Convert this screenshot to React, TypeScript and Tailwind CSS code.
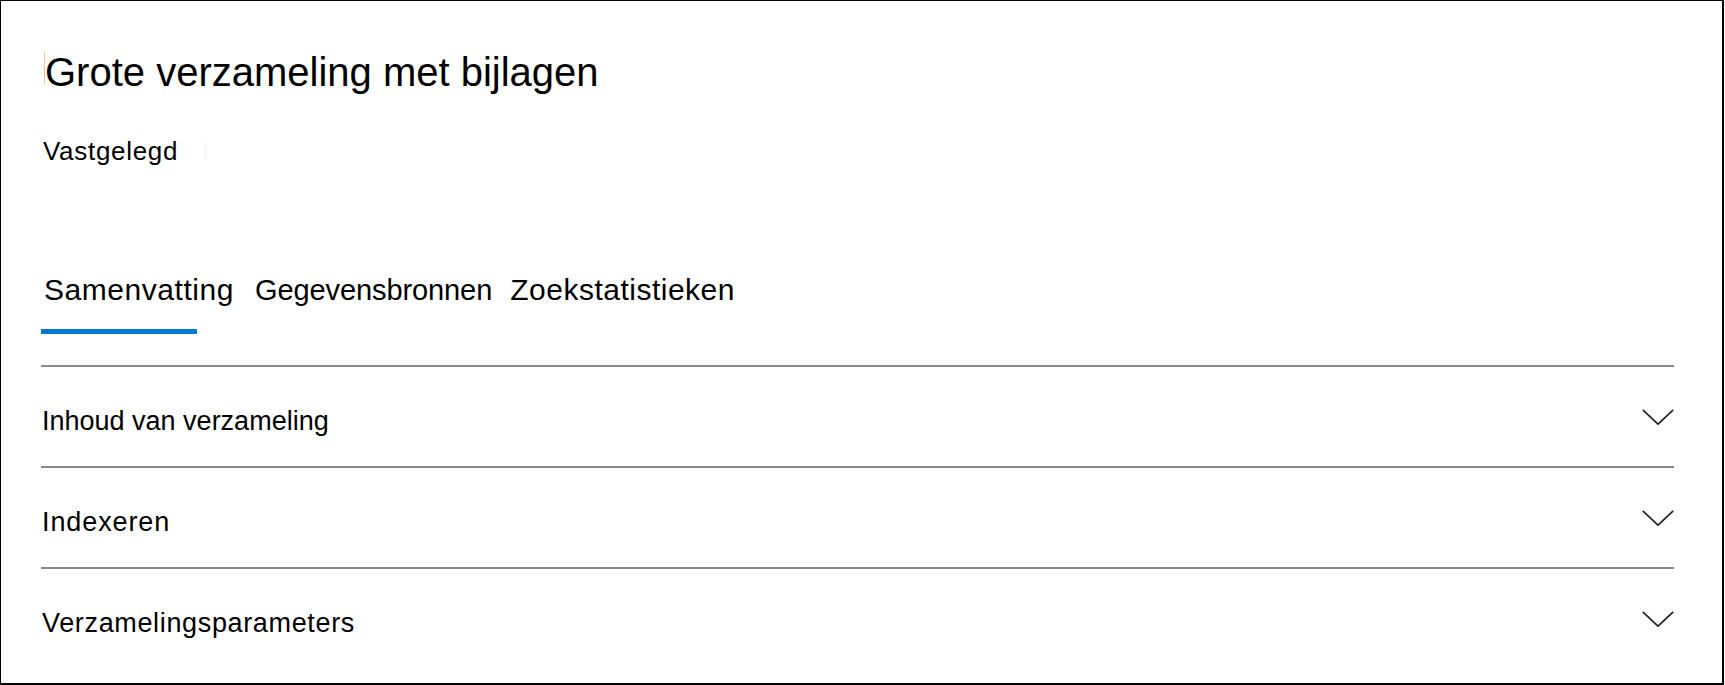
const sections = [
  { label: "Inhoud van verzameling", track: "tracking-[0px]" },
  { label: "Indexeren", track: "tracking-[0.9px]" },
  { label: "Verzamelingsparameters", track: "tracking-[0.65px]" },
];

function Chevron() {
  return (
    <svg width="32" height="16" viewBox="0 0 32 16" fill="none">
      <polyline
        points="0.8,0.8 16,15.2 31.2,0.8"
        stroke="#1f1f1f"
        strokeWidth="1.6"
        strokeLinejoin="miter"
      />
    </svg>
  );
}

export default function App() {
  return (
    <div className="h-[685px] w-[1724px] border-l border-t border-r-2 border-b-2 border-black bg-white text-black font-['Liberation_Sans',Arial,sans-serif] overflow-hidden">
      <div className="pl-[40px] pt-[47px] w-[1673px]">
        {/* header */}
        <div className="flex">
          <span className="ml-[3px] mt-[4px] w-px h-[32px] bg-[#f7c58a]"></span>
          <h1 className="text-[40px] leading-[48px] font-normal">Grote verzameling met bijlagen</h1>
        </div>
        <div className="flex mt-[39px]">
          <span className="ml-[2px] text-[26px] leading-[32px] tracking-[0.7px]">Vastgelegd</span>
          <span className="ml-[27px] mt-[5px] w-px h-[20px] bg-[#e3f8fc]"></span>
        </div>

        {/* tabs */}
        <div className="flex mt-[105px]">
          <div className="flex flex-col">
            <span className="pl-[3px] text-[30px] leading-[36px] tracking-[0.55px]">Samenvatting</span>
            <span className="mt-[21px] w-[156px] h-[5px] bg-[#0078d4]"></span>
          </div>
          <span className="ml-[21px] text-[29px] leading-[36px] tracking-[-0.1px]">Gegevensbronnen</span>
          <span className="ml-[18px] text-[30px] leading-[36px] tracking-[0.5px]">Zoekstatistieken</span>
        </div>

        {/* sections */}
        <div className="mt-[31px]">
          {sections.map((s) => (
            <div key={s.label}>
              <div className="h-[2px] bg-[#8a8a8a]"></div>
              <div className="h-[99px] flex justify-between items-start">
                <span className={`pt-[36px] pl-[1px] text-[27px] leading-[36px] ${s.track}`}>{s.label}</span>
                <span className="mt-[42px]">
                  <Chevron />
                </span>
              </div>
            </div>
          ))}
        </div>
      </div>
    </div>
  );
}
